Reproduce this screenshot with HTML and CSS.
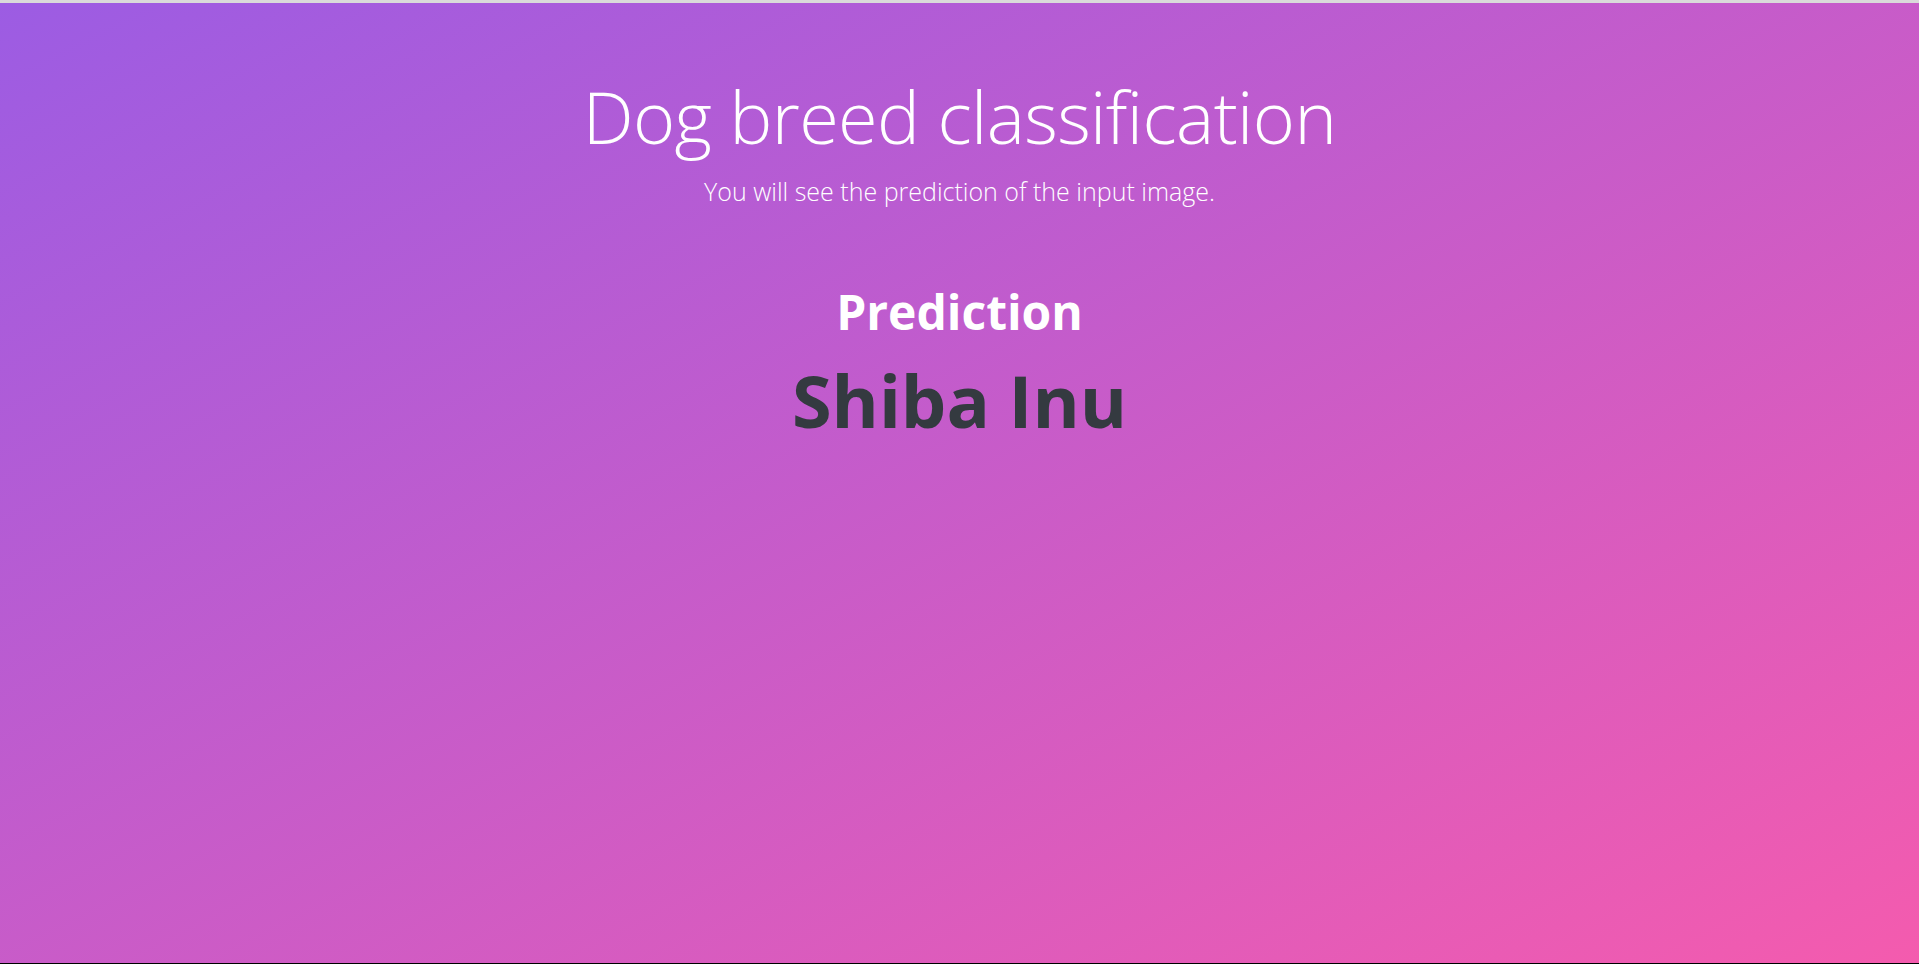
FILE: index.html
```html
<!DOCTYPE html>
<html lang="en">
<head>
<meta charset="utf-8">
<title>Dog breed classification</title>
<link rel="stylesheet" href="styles.css">
</head>
<body>
<main class="page">
  <header class="hero">
    <h1 class="title">Dog breed classification</h1>
    <p class="lead">You will see the prediction of the input image.</p>
  </header>
  <section class="result">
    <h2 class="result-label">Prediction</h2>
    <p class="result-value">Shiba Inu</p>
  </section>
</main>
</body>
</html>
```
FILE: styles.css
```css
html, body {
  margin: 0;
  padding: 0;
}
body {
  font-family: "Open Sans", "Noto Sans", "Liberation Sans", sans-serif;
}
.page {
  box-sizing: border-box;
  height: 964px;
  border-top: 3px solid #dadada;
  border-bottom: 1px solid #000;
  background: linear-gradient(to bottom right, #9c5ce3, #f45bae);
  text-align: center;
  color: #fff;
  padding-top: 70px;
}
.hero {
  display: flex;
  flex-direction: column;
  align-items: center;
}
.title {
  margin: 0;
  font-size: 72px;
  font-weight: 300;
  line-height: 1.2;
  letter-spacing: -0.6px;
}
.lead {
  margin: 14px 0 0;
  font-size: 25px;
  font-weight: 300;
  line-height: 1.5;
}
.result {
  margin-top: 72px;
  display: flex;
  flex-direction: column;
  align-items: center;
}
.result-label {
  margin: 0;
  font-size: 48px;
  font-weight: 700;
  line-height: 1.2;
}
.result-value {
  margin: 17px 0 0;
  font-size: 72px;
  font-weight: 700;
  line-height: 1.2;
  color: #343a40;
}
```
